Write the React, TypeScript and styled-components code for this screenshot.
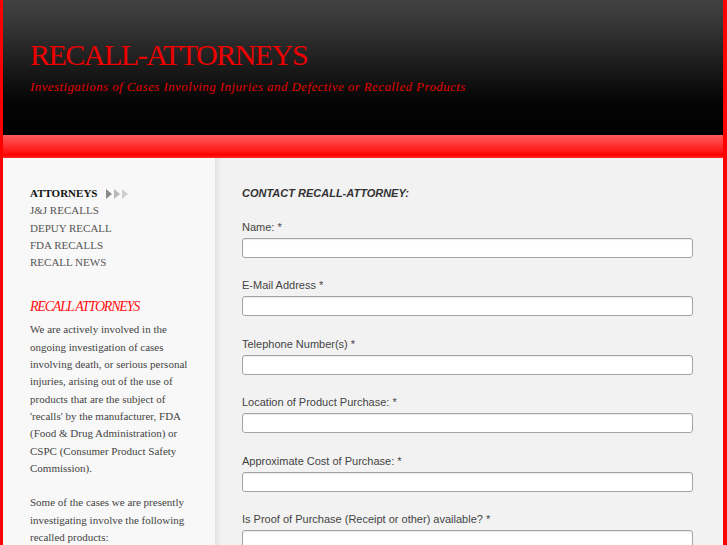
// DEPENDENCY
import React from 'react'

// STYLE
import styled, { createGlobalStyle } from 'styled-components'

const GlobalStyle = createGlobalStyle`
	html, body {
		margin: 0;
		padding: 0;
		background: #f3f3f3;
	}
	* { box-sizing: border-box; }
`

const Page = styled.div`
	width: 100%;
	height: 100vh;
	overflow: hidden;
	display: flex;
	flex-direction: column;
	border-left: 3px solid #ff0000;
	border-right: 4px solid #ff0000;
	background: #f2f2f2;
`

const Header = styled.header`
	flex: none;
	height: 135px;
	padding: 38px 0 0 27px;
	background: linear-gradient(to bottom, #424242 0%, #343434 20%, #1a1a1a 50%, #050505 75%, #000 100%);
`

const Title = styled.h1`
	margin: 0;
	font-family: "Liberation Serif", "Times New Roman", serif;
	font-weight: normal;
	font-size: 30px;
	line-height: 34px;
	letter-spacing: -1.5px;
	color: #ee0000;
`

const Tagline = styled.p`
	margin: 7px 0 0;
	font-family: "Liberation Serif", "Times New Roman", serif;
	font-style: italic;
	font-size: 13px;
	line-height: 16px;
	letter-spacing: 0.4px;
	color: #e00000;
`

const RedBar = styled.div`
	flex: none;
	height: 23px;
	background: linear-gradient(to bottom, #ff5a5a 0%, #ff4040 30%, #ff1818 70%, #ff0000 88%, #ff2a2a 100%);
`

const Body = styled.div`
	flex: 1;
	display: grid;
	grid-template-columns: 212px 1fr;
`

const Sidebar = styled.aside`
	padding: 27px 0 0 27px;
	background: #f8f8f8;
	font-family: "Liberation Serif", "Times New Roman", serif;
	font-size: 11px;
	color: #444;
`

const Nav = styled.ul`
	margin: 0;
	padding: 0;
	list-style: none;
`

const NavItem = styled.li<{ $active?: boolean }>`
	display: flex;
	align-items: center;
	gap: 9px;
	line-height: 17.3px;
	text-transform: uppercase;
	font-weight: ${p => (p.$active ? 'bold' : 'normal')};
	color: ${p => (p.$active ? '#111' : '#555')};
`

const SideHeading = styled.h3`
	margin: 27px 0 6px;
	font-style: italic;
	font-weight: normal;
	font-size: 14px;
	line-height: 17px;
	letter-spacing: -1.2px;
	color: #ff1010;
`

const SideText = styled.p`
	width: 158px;
	margin: 0 0 17.3px;
	line-height: 17.3px;
	color: #444;
`

const Main = styled.main`
	padding: 28px 0 0 27px;
	box-shadow: inset 7px 0 6px -5px rgba(0, 0, 0, 0.09);
	font-family: "Liberation Sans", Arial, sans-serif;
	font-size: 11px;
	color: #444;
`

const FormTitle = styled.h2`
	margin: 0 0 19.6px;
	font-size: 11px;
	line-height: 14px;
	font-weight: bold;
	font-style: italic;
	letter-spacing: 0;
	color: #333;
`

const Field = styled.div`
	display: flex;
	flex-direction: column;
	gap: 4.3px;
	margin-bottom: 20.2px;
`

const Label = styled.label`
	line-height: 14px;
`

const Input = styled.input`
	width: 451px;
	height: 20px;
	padding: 0 4px;
	background: #fff;
	border: 1px solid #a4a4a4;
	border-radius: 3px;
	box-shadow: inset 0 1px 1px rgba(0, 0, 0, 0.08);
	font-family: inherit;
	font-size: 11px;
`

const Arrows = () => (
	<svg width="23" height="10" viewBox="0 0 23 10">
		<polygon points="0,0 6,5 0,10" fill="#8a8a8a" />
		<polygon points="8,0 14,5 8,10" fill="#b8b8b8" />
		<polygon points="16,0 22,5 16,10" fill="#cfcfcf" />
	</svg>
)

const navLinks = ['J&J Recalls', 'DePuy Recall', 'FDA Recalls', 'Recall News']

const fields = [
	'Name: *',
	'E-Mail Address *',
	'Telephone Number(s) *',
	'Location of Product Purchase: *',
	'Approximate Cost of Purchase: *',
	'Is Proof of Purchase (Receipt or other) available? *',
]

export default function App() {
	return (
		<>
			<GlobalStyle />
			<Page>
				<Header>
					<Title>RECALL-ATTORNEYS</Title>
					<Tagline>Investigations of Cases Involving Injuries and Defective or Recalled Products</Tagline>
				</Header>

				<RedBar />

				<Body>
					<Sidebar>
						<Nav>
							<NavItem $active>
								Attorneys <Arrows />
							</NavItem>
							{navLinks.map(link => (
								<NavItem key={link}>{link}</NavItem>
							))}
						</Nav>

						<SideHeading>RECALL ATTORNEYS</SideHeading>
						<SideText>
							We are actively involved in the ongoing investigation of cases involving death, or serious
							personal injuries, arising out of the use of products that are the subject of 'recalls' by
							the manufacturer, FDA (Food &amp; Drug Administration) or CSPC (Consumer Product Safety
							Commission).
						</SideText>
						<SideText>
							Some of the cases we are presently investigating involve the following recalled products:
						</SideText>
					</Sidebar>

					<Main>
						<FormTitle>CONTACT RECALL-ATTORNEY:</FormTitle>
						{fields.map(label => (
							<Field key={label}>
								<Label>{label}</Label>
								<Input type="text" />
							</Field>
						))}
					</Main>
				</Body>
			</Page>
		</>
	)
}
